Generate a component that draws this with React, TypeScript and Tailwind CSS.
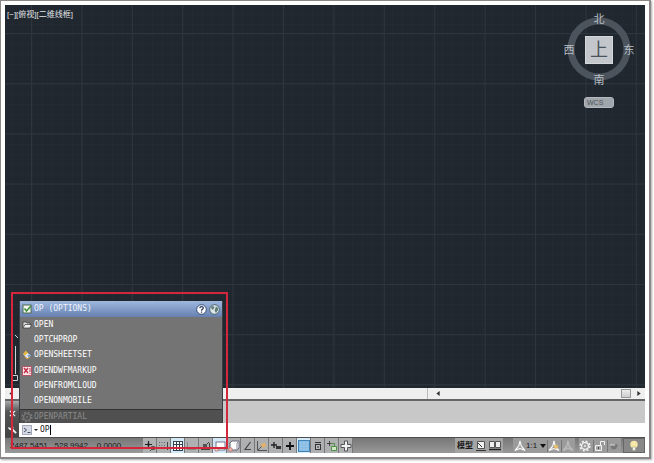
import type { ReactNode } from "react";
import { useState } from "react";

const uiFont = "font-['Liberation_Sans','Noto_Sans_CJK_SC',sans-serif]";

type Command = { name: string; icon?: ReactNode };

const OptionsIcon = () => (
  <svg viewBox="0 0 10 10" className="size-[10px]">
    <rect x="1" y="1" width="8" height="8" fill="#f4f6ee" stroke="#4d6b52" />
    <path d="M2.5 4.5 4.5 7 9 2" fill="none" stroke="#3f9140" strokeWidth="1.6" />
  </svg>
);

const FolderIcon = () => (
  <svg viewBox="0 0 10 10" className="size-[10px]">
    <path d="M1 8V2h3l1 1h3v1.5" fill="#dcdcdc" stroke="#333" strokeWidth=".7" />
    <path d="M1 8 3 4.5h6.5L8 8Z" fill="#f2f2f2" stroke="#333" strokeWidth=".7" />
  </svg>
);

const SheetSetIcon = () => (
  <svg viewBox="0 0 10 10" className="size-[10px]">
    <path d="m.5 4 4-2.5 5 4-4 3.5Z" fill="#eef3fa" stroke="#3c4a60" strokeWidth=".7" />
    <path d="M1 3.5 4 .5l2 2.5-3 2.5Z" fill="#e7b43c" />
    <path d="m5 5.5 2.5-1.5 1.5 2-2.5 1.500Z" fill="#7da3d0" />
    <path d="m2.5 6.5 2.5 2.5 3-2" fill="none" stroke="#e0a23a" />
  </svg>
);

const MarkupIcon = () => (
  <svg viewBox="0 0 10 10" className="size-[10px]">
    <rect x=".5" y=".5" width="9" height="9" fill="#f8e8e8" stroke="#b3566a" />
    <path d="m2 2 4 5M6 2 2 7" stroke="#c32642" strokeWidth="1.3" />
    <path d="M8 2v4M8 7v1" stroke="#b23850" />
  </svg>
);

const GearIcon = ({ color = "#777" }: { color?: string }) => (
  <svg viewBox="0 0 12 12" className="size-[12px]">
    <circle cx="6" cy="6" r="4.8" fill="none" stroke={color} strokeWidth="1.6" strokeDasharray="2 1.77" />
    <circle cx="6" cy="6" r="3.4" fill="none" stroke={color} strokeWidth="1.3" />
    <circle cx="6" cy="6" r="1" fill={color} />
  </svg>
);

const commands: Command[] = [
  { name: "OPEN", icon: <FolderIcon /> },
  { name: "OPTCHPROP" },
  { name: "OPENSHEETSET", icon: <SheetSetIcon /> },
  { name: "OPENDWFMARKUP", icon: <MarkupIcon /> },
  { name: "OPENFROMCLOUD" },
  { name: "OPENONMOBILE" },
];

const toggles: { label: string; on?: boolean; icon: ReactNode }[] = [
  {
    label: "推断约束",
    icon: (
      <>
        <path d="M1 4.5h7M4.5 1v7" stroke="#222" strokeWidth="1.2" />
        <path d="M3.5 3.5h2v2h-2z" fill="#222" />
        <path d="M7.5 6.5h3v3h-3zM6 11l2-2" stroke="#555" fill="#ddd" />
      </>
    ),
  },
  {
    label: "捕捉模式",
    icon: (
      <>
        <path d="M1 2.5h7M1 5.5h7M1 8.5h7" stroke="#666" strokeDasharray="1 1.5" />
        <path d="M9.5 2v8" stroke="#444" />
      </>
    ),
  },
  {
    label: "栅格显示",
    on: true,
    icon: (
      <>
        <rect x="1" y="1" width="10" height="10" fill="#fff" />
        <path d="M1.5 1v10M4.5 1v10M7.5 1v10M10.5 1v10M1 1.5h10M1 4.5h10M1 7.5h10M1 10.5h10" stroke="#34424e" />
      </>
    ),
  },
  { label: "正交模式", icon: <path d="M1.5 2v7.5H10M2 7.5h2v2" stroke="#888" /> },
  {
    label: "极轴追踪",
    icon: (
      <>
        <path d="M1 9.5h9M3 8l6-6M9.5 3v6" stroke="#444" />
        <path d="M3 4h4v3H3z" fill="#555" />
      </>
    ),
  },
  {
    label: "对象捕捉",
    on: true,
    icon: (
      <>
        <rect x="2" y="2" width="9" height="8" fill="#fff" stroke="#778" />
        <path d="M1 8h3v3H1z" fill="#f5d7d0" stroke="#b66" strokeWidth=".7" />
      </>
    ),
  },
  {
    label: "三维对象捕捉",
    icon: (
      <>
        <path d="m2 3 2-2h7v7l-2 2H2Z" fill="#fff" stroke="#667" />
        <path d="M9 3v7M9 3l2-2" stroke="#889" />
        <path d="M1 8h3v3H1z" fill="#f3c8bf" stroke="#b66" strokeWidth=".7" />
      </>
    ),
  },
  { label: "对象捕捉追踪", icon: <path d="M8.5 2 3 9.5h6" stroke="#444" strokeWidth="1.2" /> },
  {
    label: "动态 UCS",
    icon: (
      <>
        <path d="M1.5 1v9.5H11M2 10l6-6" stroke="#555" />
        <path d="m5 3 2 1 2-2v3l2 1-3 1-2 1Z" fill="#e8b060" />
      </>
    ),
  },
  {
    label: "动态输入",
    icon: (
      <>
        <path d="M1 5h6M4 2v6" stroke="#222" strokeWidth="1.3" />
        <path d="M6 6h5v3H6z" fill="#333" />
      </>
    ),
  },
  { label: "线宽", icon: <path d="M2 6h8M6 2v8" stroke="#111" strokeWidth="1.8" /> },
  {
    label: "透明度",
    on: true,
    icon: (
      <>
        <rect x=".5" y=".5" width="11" height="11" fill="#83b9e0" stroke="#3f83b8" />
        <path d="M1 3h10M1 6h10M1 9h10M3 1v10M6 1v10M9 1v10" stroke="#a9d2ef" strokeWidth=".5" />
      </>
    ),
  },
  {
    label: "快捷特性",
    icon: (
      <>
        <path d="M3 2.5h6" stroke="#333" />
        <rect x="3.5" y="4.5" width="5" height="5" fill="#bbb" stroke="#333" />
        <path d="M5 7h2" stroke="#333" />
      </>
    ),
  },
  {
    label: "选择循环",
    icon: (
      <>
        <path d="M1 3.5h5M3.5 1v5" stroke="#444" />
        <path d="M5.5 6.5h5v4h-5z" fill="#d3e8c8" stroke="#4f9144" />
        <path d="M5 3.5h3.5V6" stroke="#4f9144" />
      </>
    ),
  },
  {
    label: "注释监视器",
    icon: <path d="M4.5 1h3v3.5H11v3H7.5V11h-3V7.5H1v-3h3.5Z" fill="#f2f2f2" stroke="#555" />,
  },
];

const AnnotationIcon = ({ dim, star }: { dim?: boolean; star?: boolean }) => (
  <svg viewBox="0 0 12 12" className="size-[12px] shrink-0">
    <path
      d="M6 1 7.2 6 11 10.5 6 8.5 1 10.5 4.8 6Z"
      fill={dim ? "#a6a6a6" : "#999"}
      stroke={dim ? "#bcbcbc" : "#f6f6f6"}
      strokeWidth="1.2"
    />
    {star && <path d="m8 4 .8 1.5 2 .3-1.5 1.3.5 2L8 8l-1.8 1 .4-2-1.4-1.3 2-.2Z" fill="#f0c060" />}
  </svg>
);

function Grid() {
  return (
    <svg className="absolute inset-0 h-full w-full" aria-hidden="true">
      <defs>
        <pattern id="minor" x="7" y="9" width="10" height="10" patternUnits="userSpaceOnUse">
          <path d="M.5 0v10M0 .5h10" stroke="#222a32" />
        </pattern>
        <pattern id="major" x="26" y="28" width="50.4" height="50.2" patternUnits="userSpaceOnUse">
          <path d="M.5 0v51M0 .5h51" stroke="#2d363d" />
        </pattern>
      </defs>
      <rect width="100%" height="100%" fill="url(#minor)" />
      <rect width="100%" height="100%" fill="url(#major)" />
    </svg>
  );
}

function ViewCube() {
  return (
    <div className="absolute right-[10px] top-2 flex w-[72px] flex-col items-center text-[11px] leading-[12px] text-[#b9bfc5]">
      <div className="relative grid h-[73px] w-[72px] grid-cols-[12px_1fr_12px] grid-rows-[12px_1fr_12px] place-items-center">
        <svg viewBox="0 0 64 64" className="absolute left-1 top-1 size-[64px]" aria-hidden="true">
          <circle cx="32" cy="32" r="28" fill="none" stroke="#4b535c" strokeWidth="7" />
        </svg>
        <span className="relative col-start-2">北</span>
        <span className="relative col-start-1 row-start-2">西</span>
        <button className="relative col-start-2 row-start-2 size-[28px] border border-[#d4d7da] bg-[#c3c7cb] text-[18px] leading-[24px] text-[#4b535b]">
          上
        </button>
        <span className="relative col-start-3 row-start-2">东</span>
        <span className="relative col-start-2 row-start-3">南</span>
      </div>
      <button className="mt-[11px] h-[11px] w-[30px] rounded-[3px] border border-[#b4b9be] bg-[#a0a6ac] pl-[2px] text-left text-[7px] leading-[9px] text-[#4d545b]">
        WCS
      </button>
    </div>
  );
}

function CommandMenu() {
  return (
    <div className="absolute bottom-full left-0 w-[204px] border-x border-x-[#3a3e42] bg-[#747474] font-['DejaVu_Sans_Mono',monospace] text-[8px] text-white">
      <div className="flex h-4 items-center bg-linear-to-b from-[#9fb8df] to-[#6681b0] px-[2px]">
        <OptionsIcon />
        <span className="ml-[2px] flex-1 text-[#eef3fb]">OP (OPTIONS)</span>
        <button aria-label="帮助" className="mr-[2px]">
          <svg viewBox="0 0 11 11" className="size-[11px]">
            <circle cx="5.5" cy="5.5" r="4.8" fill="#fff" stroke="#344c78" />
            <path d="M3.8 4.3c0-2.4 3.5-2.2 3.5-.2 0 1.3-1.8 1.2-1.8 2.6M5.5 7.6v1.2" fill="none" stroke="#26385c" strokeWidth="1.2" />
          </svg>
        </button>
        <button aria-label="联机搜索">
          <svg viewBox="0 0 11 11" className="size-[11px]">
            <circle cx="5.5" cy="5.5" r="4.8" fill="#dfe9ec" stroke="#4b626b" />
            <path d="m2 3 2-1 1.5 1-1 2L3 6ZM7 2.5l2 1.5v2L7 9 5.5 6.5Z" fill="#607c78" />
          </svg>
        </button>
      </div>
      <ul className="flex h-[92px] flex-col">
        {commands.map((command) => (
          <li key={command.name} className="flex flex-1 items-center px-[2px]">
            <span className="w-[10px]">{command.icon}</span>
            <span className="ml-[2px]">{command.name}</span>
          </li>
        ))}
      </ul>
      <div className="flex h-[14px] items-center border-t border-[#333] bg-[#505050] pl-px text-[#8b8b8b]">
        <GearIcon />
        <span className="ml-px">OPENPARTIAL</span>
      </div>
    </div>
  );
}

function StatusBar() {
  return (
    <footer className="flex h-4 items-center border-t border-[#4e4e4e] bg-linear-to-b from-[#777] to-[#999] text-[8px] text-[#181818]">
      <div className="w-[138px] shrink-0 whitespace-pre pl-[5px]">2487.5451,  528.9942 ,  0.0000</div>
      <div className="flex shrink-0">
        {toggles.map((toggle) => (
          <button
            key={toggle.label}
            aria-label={toggle.label}
            className={`flex h-[15px] w-[14px] items-center justify-center border-r border-[#777] ${
              toggle.on ? "bg-[#d4e9f6]" : "bg-[#aeb0b2]"
            }`}
          >
            <svg viewBox="0 0 12 12" className="size-[12px]" fill="none">
              {toggle.icon}
            </svg>
          </button>
        ))}
      </div>
      <div className="flex-1" />
      <div className="flex h-[15px] shrink-0 items-center bg-[#a4a4a4]">
        <button className="w-[20px] whitespace-nowrap font-bold">模型</button>
        <button aria-label="快速查看布局" className="w-[14px]">
          <svg viewBox="0 0 12 12" className="size-[12px]" fill="none">
            <path d="M2.5 1.5h7v7h-7z" fill="#f2f2f2" stroke="#555" />
            <path d="m3 3 4 4" stroke="#333" />
            <path d="M1 10.5h10" stroke="#333" />
          </svg>
        </button>
        <button aria-label="快速查看图形" className="w-[14px]">
          <svg viewBox="0 0 12 12" className="size-[12px]" fill="none">
            <path d="M.5 1.5h5v6h-5zM6.5 1.5h5v6h-5z" fill="#eee" stroke="#555" />
            <path d="M0 9.5h12" stroke="#222" strokeWidth="1.5" />
          </svg>
        </button>
      </div>
      <div className="ml-[10px] flex h-[15px] shrink-0 items-center bg-[#9b9b9b]">
        <button className="flex w-[34px] items-center pl-px text-[8px]">
          <AnnotationIcon />
          1:1
          <svg viewBox="0 0 6 6" className="ml-[3px] size-[6px]">
            <path d="M0 1h6L3 5Z" fill="#111" />
          </svg>
        </button>
        <button aria-label="注释可见性" className="w-[14px] border-l border-[#777]">
          <AnnotationIcon star />
        </button>
        <button aria-label="自动缩放" className="w-[14px] border-l border-[#777]">
          <AnnotationIcon dim />
        </button>
      </div>
      <div className="ml-1 flex h-[15px] shrink-0 items-center bg-[#9b9b9b]">
        <button aria-label="切换工作空间" className="w-[14px]">
          <GearIcon color="#f2f2f2" />
        </button>
        <button aria-label="锁定" className="w-[14px] border-l border-[#777]">
          <svg viewBox="0 0 12 12" className="size-[12px]" fill="none">
            <path d="M1.5 5.5h6v5h-6z" fill="#aaa" stroke="#f3f3f3" />
            <path d="M6.5 5V1.5h4V5" stroke="#f3f3f3" />
            <path d="M4.5 7v2" stroke="#444" />
          </svg>
        </button>
        <button aria-label="硬件加速" className="w-[14px] border-l border-[#777]">
          <svg viewBox="0 0 12 12" className="size-[12px]" fill="none">
            <path d="M2 5h4l2-1 2 1-2 4-4 .5Z" fill="#777" />
            <path d="M2 5h5" stroke="#ddd" />
          </svg>
        </button>
      </div>
      <button aria-label="隔离对象" className="ml-[2px] flex h-[15px] w-[22px] shrink-0 items-center justify-center border border-[#666] bg-[#888]">
        <svg viewBox="0 0 12 12" className="size-[12px]">
          <circle cx="6" cy="4.5" r="3.7" fill="#f7e8aa" />
          <path d="M4.5 7h3v3.5h-3Z" fill="#eee" stroke="#997" strokeWidth=".5" />
        </svg>
      </button>
    </footer>
  );
}

export default function App() {
  const [value, setValue] = useState("OP");

  return (
    <div className={`h-screen bg-white pb-1 pr-[3px] ${uiFont}`}>
      <div className="h-full border-2 border-l border-t border-[#8b8887] bg-white p-1 shadow-[1px_1px_2px_#aaa]">
        <main className="relative flex h-full flex-col">
          <section className="relative flex-1 overflow-hidden bg-[#20272f]">
            <Grid />
            <div className="relative pl-[2px] pt-1 text-[8px] leading-[12px] text-[#e2e5e8]">[−][俯视][二维线框]</div>
            <ViewCube />
            <svg viewBox="0 0 16 60" className="absolute bottom-0 left-[6px] h-[60px] w-4" fill="none" stroke="#cfd3d6">
              <path d="m4 7 3 3M4.5 18v28M.5 47.5h6v5h-6z" />
            </svg>
          </section>

          <div className="flex h-[11px] shrink-0 bg-[#efefef]">
            <button aria-label="上一个" className="flex w-[11px] items-center justify-center">
              <svg viewBox="0 0 4 6" className="h-[5px] w-[4px]">
                <path d="M4 0v6L0 3Z" fill="#333" />
              </svg>
            </button>
            <div className="flex-[17] border-r border-[#bbb]" />
            <div className="flex flex-[9] items-center justify-between">
              <svg viewBox="0 0 4 6" className="ml-2 h-[5px] w-[4px]">
                <path d="M4 0v6L0 3Z" fill="#333" />
              </svg>
              <div className="mr-1 flex items-center gap-[6px]">
                <div className="h-[9px] w-[10px] border border-[#999] bg-linear-to-b from-[#eee] to-[#ccc]" />
                <svg viewBox="0 0 4 6" className="h-[5px] w-[4px]">
                  <path d="M0 0v6l4-3Z" fill="#333" />
                </svg>
              </div>
            </div>
          </div>

          <section className="flex h-[38px] shrink-0 border-t-2 border-[#656565]">
            <div className="flex w-[14px] flex-col items-center justify-end gap-2 bg-linear-to-b from-[#aaa] via-[#555] via-30% to-[#444] pb-[3px]">
              <button aria-label="关闭">
                <svg viewBox="0 0 8 8" className="size-[7px]">
                  <path d="m1 1 6 6M7 1 1 7" stroke="#eee" strokeWidth="1.5" />
                </svg>
              </button>
              <button aria-label="自定义">
                <svg viewBox="0 0 10 10" className="size-[9px]">
                  <path d="m3 3 6 6" stroke="#eee" strokeWidth="2.2" />
                  <path d="M1 2.5a2.2 2.2 0 0 0 3.5 2A2.2 2.2 0 0 0 3.5.8" fill="none" stroke="#eee" strokeWidth="1.6" />
                </svg>
              </button>
            </div>
            <div className="flex flex-1 flex-col">
              <div className="flex-1 bg-[#c8c8c8]" />
              <div className="relative flex h-[14px] items-center bg-white pl-[3px] font-['DejaVu_Sans_Mono',monospace] text-[8px] text-[#222]">
                <CommandMenu />
                <svg viewBox="0 0 10 10" className="size-[10px]" fill="none">
                  <rect x=".5" y=".5" width="9" height="9" fill="#d6dae5" stroke="#a4a9bb" />
                  <path d="m2 3 2.5 2L2 7M5.5 7.5h3" stroke="#4a5068" />
                </svg>
                <svg viewBox="0 0 4 2" className="ml-[2px] h-[2px] w-[4px]">
                  <path d="M0 0h4L2 2Z" fill="#222" />
                </svg>
                <input
                  aria-label="命令"
                  value={value}
                  onChange={(e) => setValue(e.target.value)}
                  className="field-sizing-content ml-[2px] h-[12px] caret-transparent outline-none"
                />
                <span className="h-[10px] w-px bg-black" />
              </div>
            </div>
          </section>

          <StatusBar />

          <div className="pointer-events-none absolute bottom-1 left-[6px] h-[157px] w-[217px] border-2 border-[#d5273c]" />
        </main>
      </div>
    </div>
  );
}
